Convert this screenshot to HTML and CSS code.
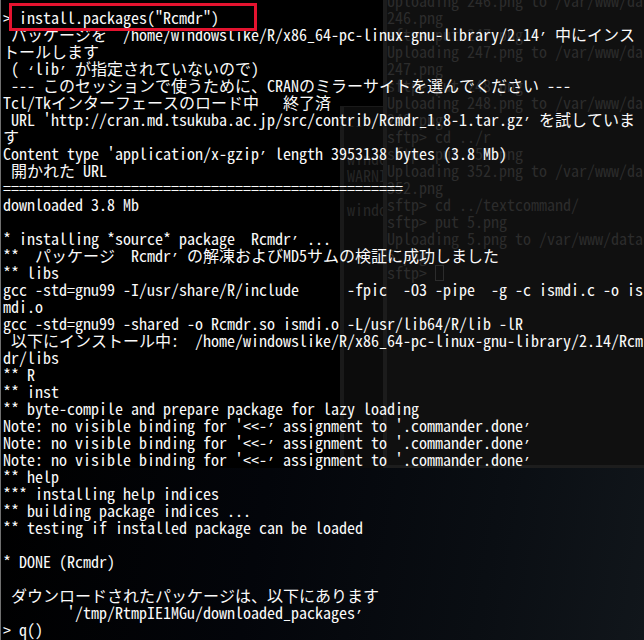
FILE: index.html
```html
<!DOCTYPE html>
<html lang="ja">
<head>
<meta charset="utf-8">
<title>R install.packages</title>
<link rel="stylesheet" href="styles.css">
</head>
<body>
<div class="screen">
  <div class="desk-low"></div>
  <div class="win win-a">
<pre class="back-text">

--

windo
WARNI

windo</pre>
  </div>
  <div class="win win-b">
<pre class="back-text">Uploading 246.png to /var/www/da
246.png
sftp&gt; put 247.png
Uploading 247.png to /var/www/da
247.png
sftp&gt; put 248.png
Uploading 248.png to /var/www/da
248.png
sftp&gt; cd ../r
sftp&gt; put 352.png
Uploading 352.png to /var/www/da
352.png
sftp&gt; cd ../textcommand/
sftp&gt; put 5.png
Uploading 5.png to /var/www/data
5.png
sftp&gt; <span class="cursor"></span></pre>
  </div>
<pre class="term">&gt; install.packages("Rcmdr")
 パッケージを  /home/windowslike/R/x86_64-pc-linux-gnu-library/2.14<span class="q">’</span> 中にインス
トールします
 ( <span class="q">‘</span>lib<span class="q">’</span> が指定されていないので)
 --- このセッションで使うために、CRANのミラーサイトを選んでください ---
Tcl/Tkインターフェースのロード中   終了済
 URL 'http://cran.md.tsukuba.ac.jp/src/contrib/Rcmdr_1.8-1.tar.gz<span class="q">’</span> を試していま
す
Content type 'application/x-gzip<span class="q">’</span> length 3953138 bytes (3.8 Mb)
 開かれた URL
==================================================
downloaded 3.8 Mb

* installing *source* package  Rcmdr<span class="q">’</span> ...
**  パッケージ  Rcmdr<span class="q">’</span> の解凍およびMD5サムの検証に成功しました
** libs
gcc -std=gnu99 -I/usr/share/R/include      -fpic  -O3 -pipe  -g -c ismdi.c -o is
mdi.o
gcc -std=gnu99 -shared -o Rcmdr.so ismdi.o -L/usr/lib64/R/lib -lR
 以下にインストール中:  /home/windowslike/R/x86_64-pc-linux-gnu-library/2.14/Rcm
dr/libs
** R
** inst
** byte-compile and prepare package for lazy loading
Note: no visible binding for '&lt;&lt;-<span class="q">’</span> assignment to '.commander.done<span class="q">’</span>
Note: no visible binding for '&lt;&lt;-<span class="q">’</span> assignment to '.commander.done<span class="q">’</span>
Note: no visible binding for '&lt;&lt;-<span class="q">’</span> assignment to '.commander.done<span class="q">’</span>
** help
*** installing help indices
** building package indices ...
** testing if installed package can be loaded

* DONE (Rcmdr)

 ダウンロードされたパッケージは、以下にあります
        '/tmp/RtmpIE1MGu/downloaded_packages<span class="q">’</span>
&gt; q()</pre>
  <div class="mark"></div>
</div>
</body>
</html>
```

FILE: styles.css
```css
html, body {
  margin: 0;
  padding: 0;
  background: #000;
}

.screen {
  position: relative;
  width: 644px;
  height: 640px;
  overflow: hidden;
  background: #000;
}

.desk-low {
  position: absolute;
  left: 0;
  right: 0;
  top: 468px;
  bottom: 0;
  background: linear-gradient(100deg, #000 0%, #03050a 40%, #0a0e13 75%, #11161b 100%);
}

.win {
  position: absolute;
  top: 0;
  bottom: 172px;
  right: 0;
  box-sizing: border-box;
}

.win-a {
  left: 340px;
  top: 106px;
  background: #0c0c0c;
  border-left: 4px solid #1a1a1a;
  border-top: 1px solid #1a1a1a;
}

.win-a .back-text {
  padding: 0 0 0 3px;
  color: #262626;
}

.win-b {
  left: 383px;
  background: #101010;
  border-left: 4px solid #1c1c1c;
  border-bottom: 3px solid #1d1d1d;
}

.back-text {
  margin: 0;
  padding: 0;
  margin-top: -8px;
  font-family: "Noto Sans Mono CJK JP", "DejaVu Sans Mono", monospace;
  font-size: 16px;
  line-height: 17px;
  color: #2c2c2c;
  white-space: pre;
}

.cursor {
  display: inline-block;
  width: 7px;
  height: 14px;
  border: 1px solid #2c2c2c;
  vertical-align: -2px;
}

.term {
  position: relative;
  z-index: 1;
  margin: 0;
  padding: 9px 0 0 2px;
  border-left: 1px solid #707070;
  height: 640px;
  box-sizing: border-box;
  font-family: "Noto Sans Mono CJK JP", "DejaVu Sans Mono", monospace;
  font-size: 16px;
  line-height: 17px;
  color: #fafafa;
  white-space: pre;
}

.q {
  font-family: "Liberation Mono", monospace;
  font-size: 13.33px;
  line-height: 0;
}

.mark {
  position: absolute;
  z-index: 2;
  left: 9px;
  top: 3px;
  width: 248px;
  height: 28px;
  box-sizing: border-box;
  border: 3px solid #e5132f;
}
```
